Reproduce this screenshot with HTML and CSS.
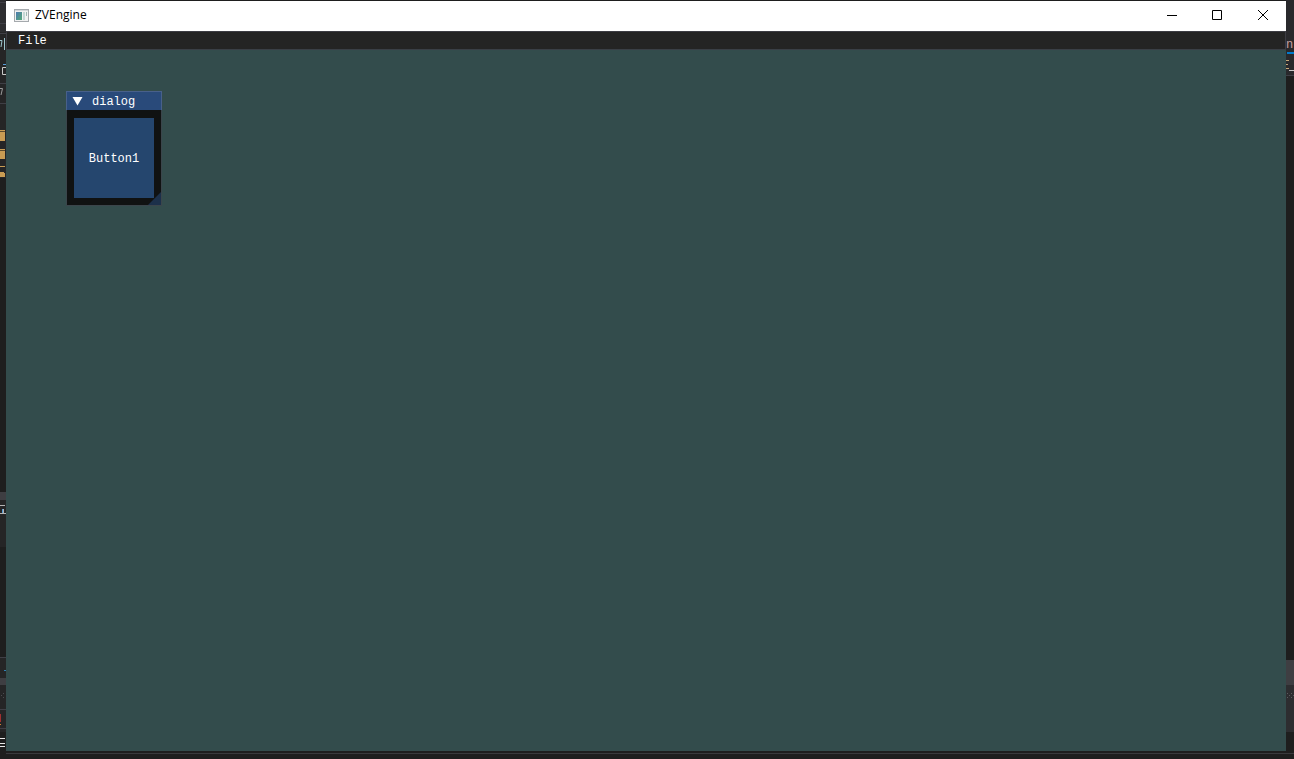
FILE: index.html
```
<!DOCTYPE html>
<html lang="en">
<head>
    <meta charset="UTF-8">
    <meta name="viewport" content="width=device-width, initial-scale=1.0">
    <title>ZVEngine</title>
    <link rel="stylesheet" href="styles.css">
</head>
<body>

    <!-- editor behind the window, left edge -->
    <svg class="edge edge-left" width="6" height="759" aria-hidden="true">
        <rect width="6" height="759" fill="#252526"/>
        <rect width="6" height="32" fill="#2d2d30"/>
        <path d="M0 2.500H6M0 23.500H6M0 33.500H6M0 83.500H6M0 103.500H6M0 657.500H6M0 709.500H6M0 728.500H6" stroke="#3f3f46"/>
        <path d="M0 40.500H2L1 47M4.500 38V50" stroke="#9cc4cc" fill="none"/>
        <path d="M3 64.500H6" stroke="#569cd6"/>
        <path d="M6 67.500H2.500V74.500H6" stroke="#c8c8c8" fill="none"/>
        <path d="M0 88.500H2.500L1 95" stroke="#9a9a9a" fill="none"/>
        <path d="M0 130h5v11H0zM0 149h5v10H0zM0 166h5v1H0zM0 172h4v1h1v4H0z" fill="#c99c53"/>
        <path d="M0 131.500H5M0 150.500H5" stroke="#5c4a2c"/>
        <rect y="178" width="6" height="314" fill="#1e1e1e"/>
        <rect y="492" width="6" height="8" fill="#3e3e42"/>
        <path d="M0 505.500H5M0 513.500H6M3.500 509V513" stroke="#b4b4b4"/>
        <path d="M2.500 509V513" stroke="#569cd6"/>
        <rect y="547" width="6" height="110" fill="#1e1e1e"/>
        <path d="M4 670.500H6" stroke="#2f80b5"/>
        <rect y="678" width="6" height="7" fill="#3e3e42"/>
        <path d="M3 693h1v1h-1zM1 695h1v1H1zM3 697h1v1h-1z" fill="#4c4c50"/>
        <rect y="714" width="1" height="8" fill="#a03030"/>
        <rect y="724" width="1" height="1" fill="#d08030"/>
        <rect y="732" width="6" height="27" fill="#1e1e1e"/>
        <path d="M0 738.500H5M0 743.500H5M0 746.500H5" stroke="#e8e8e8"/>
    </svg>

    <main class="window">
        <header class="titlebar">
            <svg class="app-icon" width="15" height="13" viewBox="0 0 15 13" aria-hidden="true">
                <defs>
                    <linearGradient id="pane" x1="0" y1="0" x2="1" y2="1">
                        <stop offset="0" stop-color="#4d7bb0"/>
                        <stop offset="1" stop-color="#55a878"/>
                    </linearGradient>
                </defs>
                <rect x="0.500" y="0.500" width="14" height="12" fill="#f2f2f2" stroke="#a5a9ad"/>
                <rect x="1" y="1" width="13" height="1" fill="#d3d7da"/>
                <rect x="2" y="3" width="6" height="8" fill="url(#pane)"/>
                <rect x="9" y="3" width="2" height="8" fill="#c5d8d6"/>
                <rect x="12" y="3" width="1" height="4" fill="#9fb8b4"/>
            </svg>
            <h1 class="title">ZVEngine</h1>
            <div class="controls">
                <button type="button" aria-label="Minimize">
                    <svg width="11" height="11"><path d="M1 5.500H11" stroke="#000"/></svg>
                </button>
                <button type="button" aria-label="Maximize">
                    <svg width="11" height="11"><path d="M0.500 0.500H9.500V9.500H0.500Z" stroke="#000" fill="none"/></svg>
                </button>
                <button type="button" aria-label="Close">
                    <svg width="11" height="11"><path d="M0 0L10 10M10 0L0 10" stroke="#000"/></svg>
                </button>
            </div>
        </header>

        <nav class="menubar">
            <button type="button" class="menu-item">File</button>
        </nav>

        <div class="viewport">
            <section class="dialog">
                <button type="button" class="dialog-title">
                    <svg width="11" height="9" aria-hidden="true"><path d="M0.500 0H10.500L5.500 8.500Z" fill="#fff"/></svg>
                    <span>dialog</span>
                </button>
                <div class="dialog-body">
                    <button type="button" class="dialog-button">Button1</button>
                </div>
                <svg class="grip" width="13" height="13" aria-hidden="true"><path d="M13 0V13H0Z" fill="#1c304a"/></svg>
            </section>
        </div>
    </main>

    <!-- editor behind the window, right edge -->
    <svg class="edge" width="8" height="759" aria-hidden="true">
        <rect width="8" height="759" fill="#1e1e1e"/>
        <rect width="8" height="75" fill="#29292c"/>
        <text x="0" y="48" class="code">n</text>
        <rect x="1" y="52" width="7" height="2" fill="#007acc"/>
        <path d="M0 60.500H3M0 64.500H2M0 68.500H3" stroke="#c8a878"/>
        <path d="M3 70.500H8" stroke="#c8c8c8"/>
        <path d="M0 75.500H8" stroke="#3f3f46"/>
        <rect y="660" width="8" height="25" fill="#3e3e42"/>
        <rect y="685" width="8" height="47" fill="#2d2d30"/>
        <path d="M1 693h1v1H1zM5 693h1v1H5zM3 695h1v1H3zM7 695h1v1H7zM1 697h1v1H1zM5 697h1v1H5z" fill="#5a5a5e"/>
        <path d="M0 753.500H8" stroke="#3a3a3d"/>
    </svg>

</body>
</html>
```
FILE: styles.css
```
* {
    box-sizing: border-box;
}
body {
    margin: 0;
    min-height: 100vh;
    display: flex;
    overflow: hidden;
    background: linear-gradient(#3a3a3d, #3a3a3d) 0 calc(100% - 5px) / 100% 1px no-repeat #1e1e1e;
}
button {
    margin: 0;
    padding: 0;
    border: none;
    background: none;
    color: inherit;
    font: inherit;
}
svg {
    display: block;
}
.edge {
    flex: none;
}
.window {
    flex: 1;
    display: flex;
    flex-direction: column;
    margin: 1px 0 8px;
    background-color: #334c4c;
}

/* title bar */
.titlebar {
    display: flex;
    align-items: center;
    height: 30px;
    padding-left: 8px;
    padding-bottom: 2px;
    background-color: #fff;
    color: #000;
}
.app-icon {
    margin-right: 6px;
}
.title {
    margin: 0;
    font: 12px/16px "Open Sans", "Noto Sans", sans-serif;
}
.controls {
    display: flex;
    height: 100%;
    margin-left: auto;
}
.controls button {
    display: flex;
    align-items: center;
    justify-content: center;
    width: 46px;
}
.controls button:hover {
    background-color: #e5e5e5;
}

/* menu bar and dialog */
.menubar,
.dialog {
    color: #fff;
    font: 12px/17px "Liberation Mono", monospace;
}
.menubar {
    height: 19px;
    padding-top: 1px;
    padding-left: 11px;
    border: 1px solid #3c3c43;
    border-bottom-color: #3a3f46;
    background-color: #242424;
}
.menu-item {
    display: block;
}
.viewport {
    position: relative;
    flex: 1;
}
.dialog {
    position: absolute;
    top: 41px;
    left: 60px;
    border: 1px solid #3b454b;
    background-color: #101212;
}
.dialog-title {
    display: flex;
    align-items: center;
    gap: 9px;
    width: calc(100% + 2px);
    height: 19px;
    margin: -1px -1px 0;
    padding-left: 5px;
    border: 1px solid #48608a;
    border-bottom: none;
    background-color: #294a7a;
    line-height: 18px;
}
.dialog-title span {
    padding-top: 1px;
}
.dialog-body {
    padding: 8px 7px 7px;
}
.dialog-button {
    display: block;
    width: 80px;
    height: 80px;
    padding-top: 2px;
    background-color: #25466e;
}
.dialog-button:hover {
    background-color: #4296fa;
}
.grip {
    position: absolute;
    right: 0;
    bottom: 0;
}

/* code showing past the right edge */
.code {
    font: 12px "Liberation Mono", monospace;
    fill: #c8a0a0;
}
```
